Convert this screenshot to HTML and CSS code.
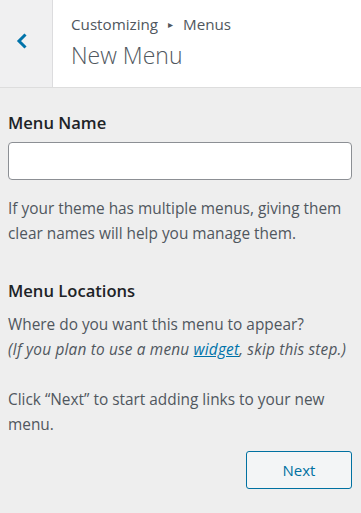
FILE: index.html
```html
<!DOCTYPE html>
<html>
<head>
    <title>New Menu</title>
    <link rel="stylesheet" href="styles.css">
</head>
<body>
    <div class="header">
        <button class="back" aria-label="Back">
            <svg width="12" height="16" viewBox="0 0 12 16">
                <path d="M9.5 1.5 L3 8 L9.5 14.5" fill="none" stroke="#0073aa" stroke-width="3"/>
            </svg>
        </button>
        <div class="title">
            <div class="crumb">Customizing <span class="arrow">&#9656;</span> Menus</div>
            <h3>New Menu</h3>
        </div>
    </div>

    <div class="content">
        <label class="label" for="menuName">Menu Name</label>
        <input type="text" id="menuName">
        <p class="help">If your theme has multiple menus, giving them clear names will help you manage them.</p>

        <h4 class="label">Menu Locations</h4>
        <p class="text">Where do you want this menu to appear?<br>
            <em>(If you plan to use a menu <a href="#">widget</a>, skip this step.)</em></p>
        <p class="text gap">Click “Next” to start adding links to your new menu.</p>

        <div class="actions">
            <button class="next">Next</button>
        </div>
    </div>
</body>
</html>
```

FILE: styles.css
```css
body {
    margin: 0;
    font-family: "Open Sans", sans-serif;
    background-color: #eeeeee;
    color: #50575e;
}

.header {
    display: flex;
    height: 87px;
    background-color: white;
    border-bottom: 1px solid #dddddd;
}

.back {
    width: 53px;
    padding: 0 9px 6px 0;
    background-color: #f0f0f1;
    border: none;
    border-right: 1px solid #dcdcde;
    display: flex;
    align-items: center;
    justify-content: center;
    cursor: pointer;
}

.title {
    padding: 12px 0 0 18px;
}

.crumb {
    font-size: 15.2px;
    line-height: 24px;
    color: #50575e;
}

.arrow {
    font-size: 10px;
    vertical-align: 2px;
    margin: 0 6px;
}

h3 {
    margin: 4px 0 0;
    font-size: 23px;
    font-weight: 300;
    line-height: 30px;
    color: #50575e;
}

.content {
    padding: 22px 9px 20px 8px;
}

.label {
    display: block;
    margin: 0;
    font-size: 16.6px;
    font-weight: 600;
    line-height: 26px;
    color: #1d2327;
}

input[type="text"] {
    display: block;
    box-sizing: border-box;
    width: 100%;
    height: 38px;
    margin-top: 6px;
    border: 1px solid #8c8f94;
    border-radius: 4px;
    background-color: white;
}

.help, .text {
    margin: 0;
    font-size: 15.4px;
    line-height: 25px;
}

.help {
    margin: 16px 0 32px;
}

.text {
    margin-top: 8px;
}

.text em {
    white-space: nowrap;
    letter-spacing: 0.18px;
}

.text.gap {
    margin-top: 25px;
}

a {
    color: #0073aa;
}

.actions {
    display: flex;
    justify-content: flex-end;
    margin-top: 14px;
}

.next {
    width: 106px;
    height: 38px;
    font-family: inherit;
    font-size: 15px;
    color: #0071a1;
    background-color: #f3f5f6;
    border: 1px solid #0071a1;
    border-radius: 3px;
    cursor: pointer;
}
```
